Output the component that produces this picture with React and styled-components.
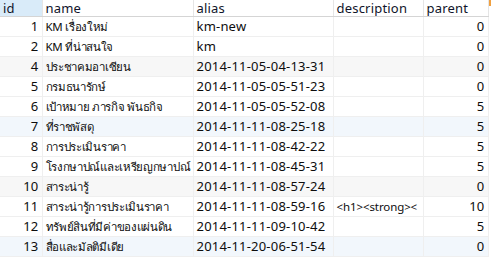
import styled, { createGlobalStyle } from "styled-components";

const GlobalStyle = createGlobalStyle`
  html, body {
    margin: 0;
    padding: 0;
    background: #ffffff;
  }
  body {
    font-family: "Noto Sans", "Liberation Sans", sans-serif;
  }
`;

const Frame = styled.div`
  position: relative;
  width: 492px;
  height: 257px;
  overflow: hidden;
  background: #fff;
`;

const Grid = styled.table`
  border-collapse: collapse;
  table-layout: fixed;
  width: 488px;
  font-size: 13px;
  letter-spacing: 0.2px;
  color: #0d0d0d;
`;

const HeadCell = styled.th`
  height: 16px;
  padding: 0 3px;
  text-align: left;
  font-weight: normal;
  color: #10142a;
  white-space: nowrap;
  overflow: hidden;
  border-bottom: 1px solid #d5d5d5;
  border-right: 1px solid #e5e5e5;
  background: ${(p) => (p.$active ? "#d9ebf9" : "#ffffff")};
  line-height: 16px;
`;

const Row = styled.tr`
  background: ${(p) =>
    p.$tint === "gray" ? "#f7f7f7" : p.$tint === "blue" ? "#f2f7fc" : "#ffffff"};
`;

const Cell = styled.td`
  height: 19px;
  padding: 0 3px;
  white-space: nowrap;
  overflow: hidden;
  border-bottom: 1px solid #efefef;
  border-right: 1px solid #efefef;
  text-align: ${(p) => (p.$num ? "right" : "left")};
  line-height: 19px;
`;

const NameCell = styled(Cell)`
  font-size: 11.5px;
  letter-spacing: -0.3px;
`;

const DescCell = styled(Cell)`
  font-size: 11.5px;
  letter-spacing: -0.1px;
`;

const Corner = styled.div`
  position: absolute;
  top: 0;
  right: 1px;
  width: 2px;
  height: 6px;
  background: #f0a040;
`;

const rows = [
  [1, "KM เรื่องใหม่", "km-new", "", 0],
  [2, "KM ที่น่าสนใจ", "km", "", 0],
  [4, "ประชาคมอาเซียน", "2014-11-05-04-13-31", "", 0],
  [5, "กรมธนารักษ์", "2014-11-05-05-51-23", "", 0],
  [6, "เป้าหมาย ภารกิจ พันธกิจ", "2014-11-05-05-52-08", "", 5],
  [7, "ที่ราชพัสดุ", "2014-11-11-08-25-18", "", 5],
  [8, "การประเมินราคา", "2014-11-11-08-42-22", "", 5],
  [9, "โรงกษาปณ์และเหรียญกษาปณ์", "2014-11-11-08-45-31", "", 5],
  [10, "สาระน่ารู้", "2014-11-11-08-57-24", "", 0],
  [11, "สาระน่ารู้การประเมินราคา", "2014-11-11-08-59-16", "<h1><strong><", 10],
  [12, "ทรัพย์สินที่มีค่าของแผ่นดิน", "2014-11-11-09-10-42", "", 5],
  [13, "สื่อและมัลติมีเดีย", "2014-11-20-06-51-54", "", 0],
];

const tintFor = (i) => (i % 3 !== 2 ? "none" : i % 6 === 2 ? "gray" : "blue");

const App = () => {
  return (
    <Frame>
      <GlobalStyle />
      <Grid>
        <colgroup>
          <col style={{ width: 42 }} />
          <col style={{ width: 151 }} />
          <col style={{ width: 140 }} />
          <col style={{ width: 90 }} />
          <col style={{ width: 65 }} />
        </colgroup>
        <thead>
          <tr>
            <HeadCell $active>id</HeadCell>
            <HeadCell>name</HeadCell>
            <HeadCell>alias</HeadCell>
            <HeadCell>description</HeadCell>
            <HeadCell>parent</HeadCell>
          </tr>
        </thead>
        <tbody>
          {rows.map((r, i) => (
            <Row key={r[0]} $tint={tintFor(i)}>
              <Cell $num>{r[0]}</Cell>
              <NameCell>{r[1]}</NameCell>
              <Cell>{r[2]}</Cell>
              <DescCell>{r[3]}</DescCell>
              <Cell $num>{r[4]}</Cell>
            </Row>
          ))}
        </tbody>
      </Grid>
      <Corner />
    </Frame>
  );
};

export default App;
